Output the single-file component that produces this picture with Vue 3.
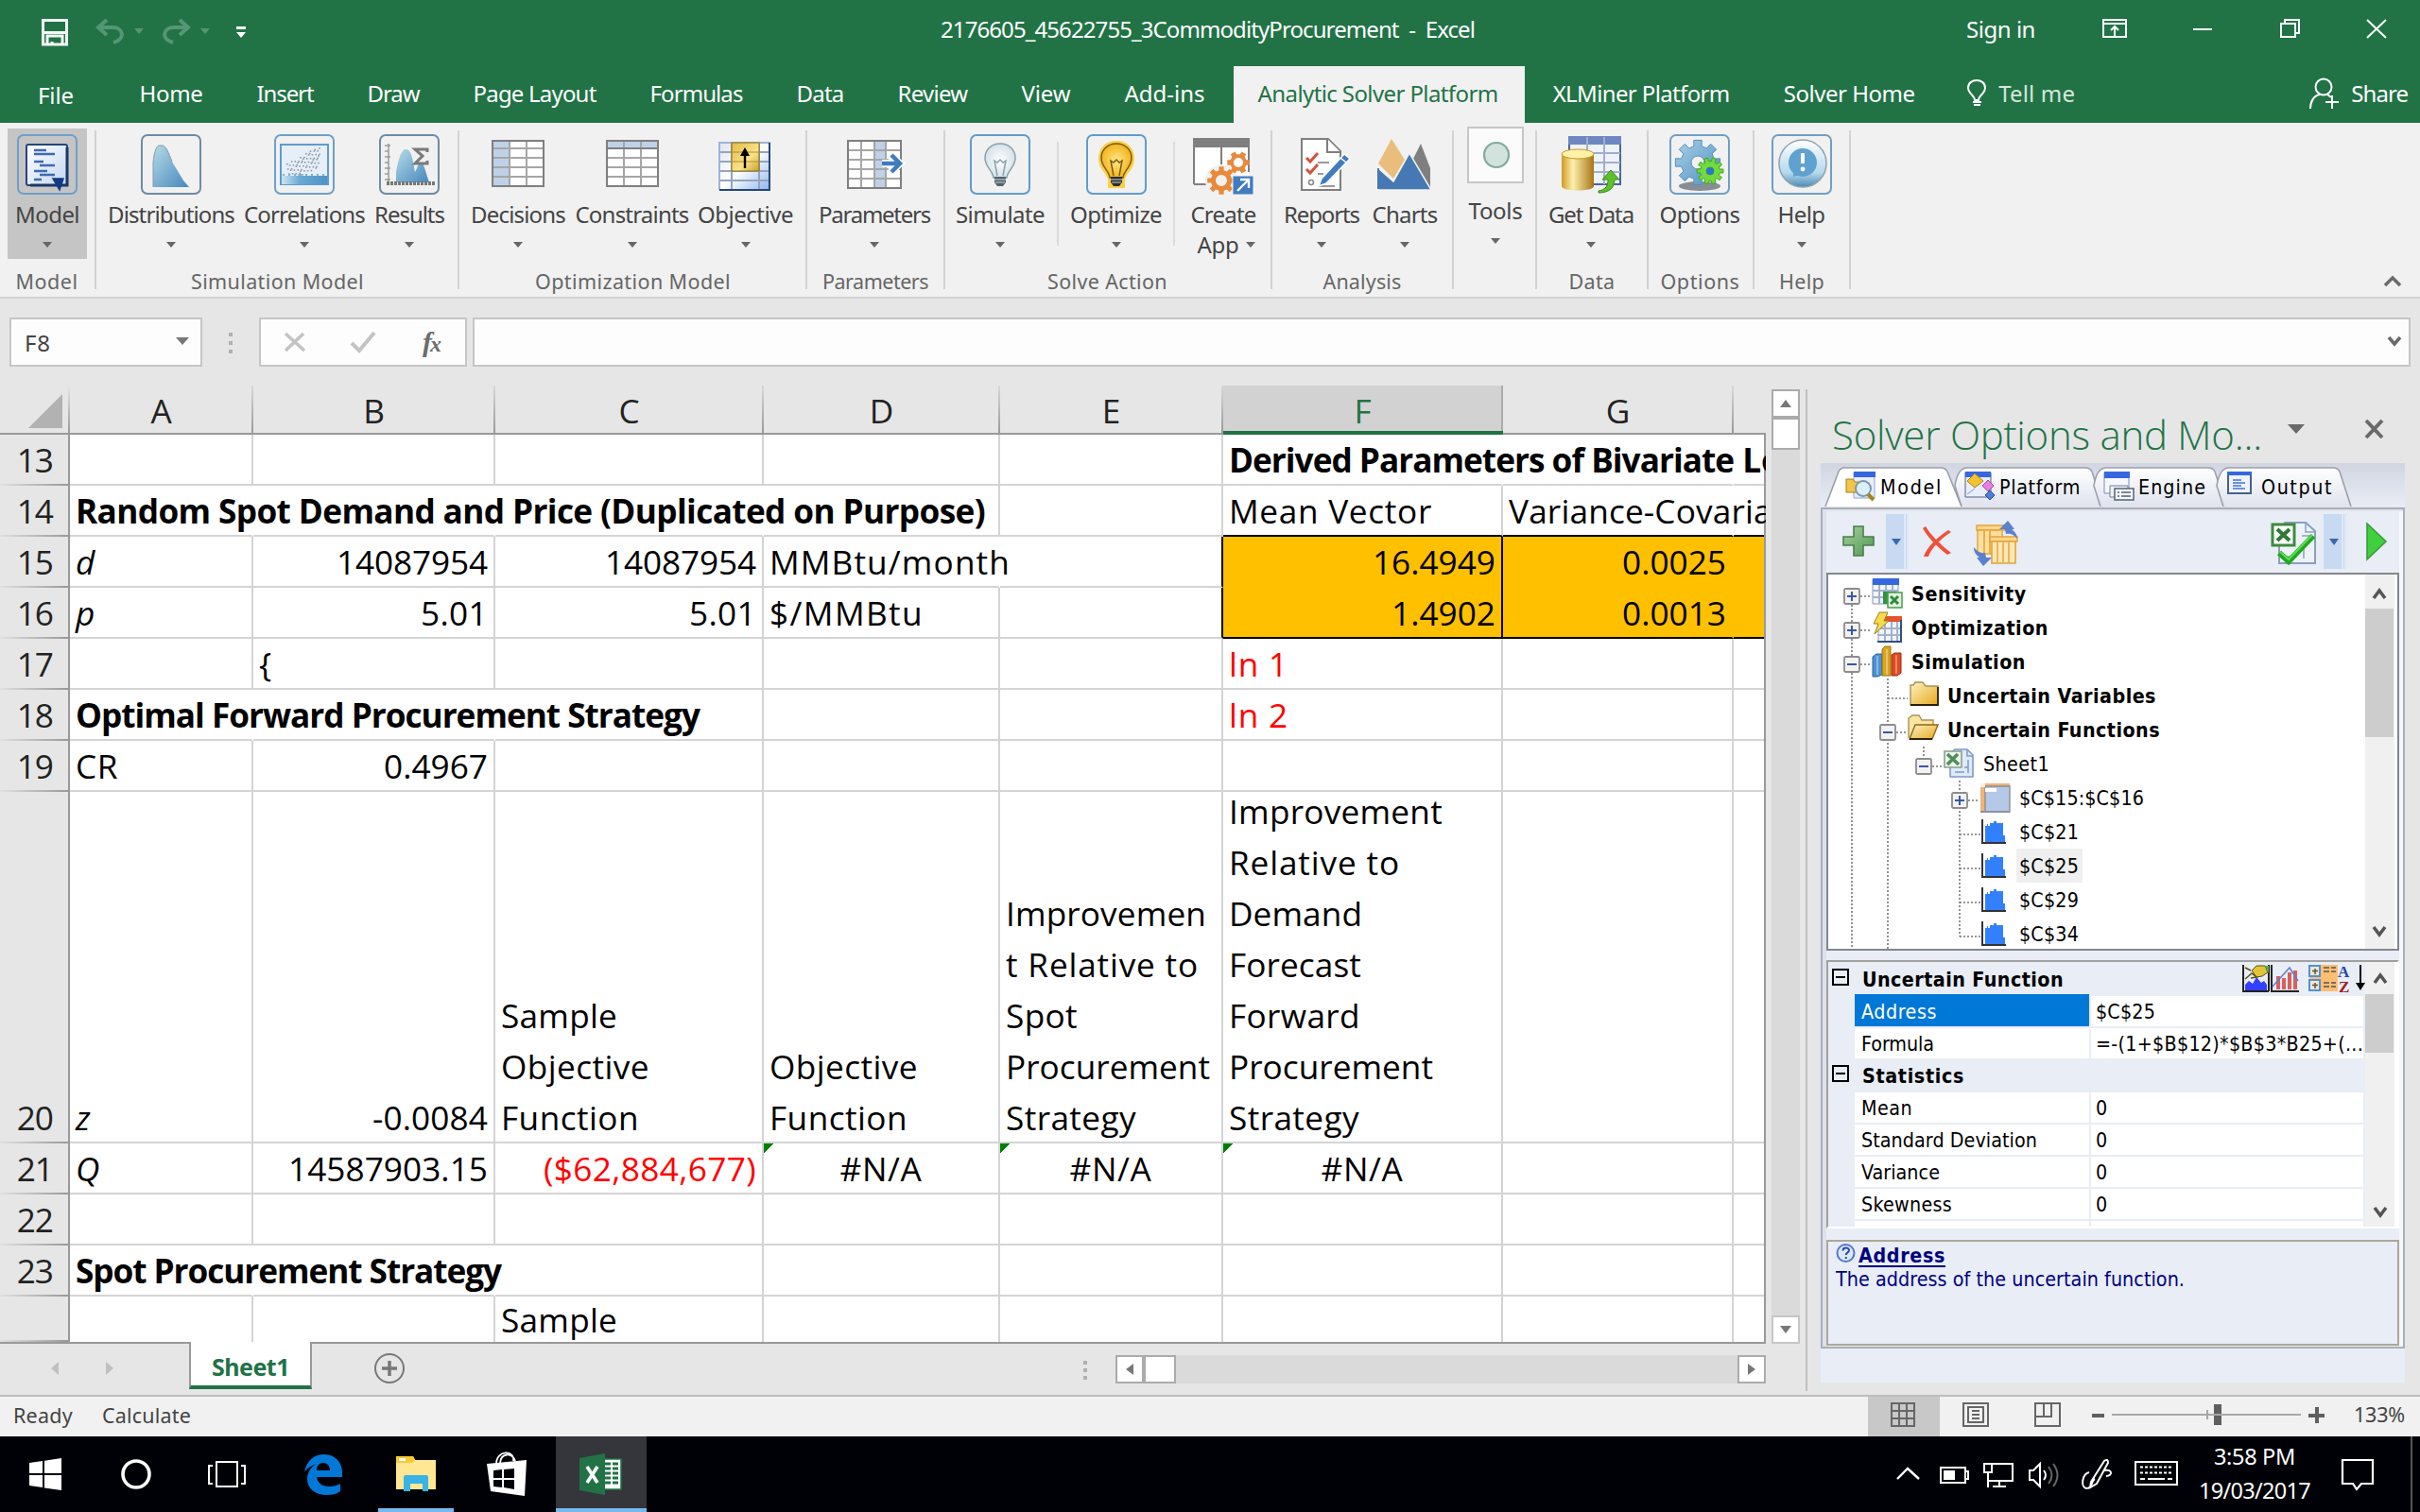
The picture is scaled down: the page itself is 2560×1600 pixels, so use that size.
<script setup>
const vFit = {
  mounted(el, { value }) {
    if (!value) return
    const natural = el.getBoundingClientRect().width
    el.style.letterSpacing = (value - natural) / el.textContent.length + 'px'
  }
}

const tabs = [
  ['Home', 67], ['Insert', 60], ['Draw', 55], ['Page Layout', 130], ['Formulas', 98], ['Data', 50],
  ['Review', 74], ['View', 52], ['Add-ins', 85], ['Analytic Solver Platform', 254],
  ['XLMiner Platform', 187], ['Solver Home', 139]
]

const frame = (s = '#6f9fc6') => `<rect x="1" y="1" width="62" height="62" rx="6" fill="none" stroke="${s}" stroke-width="2"/>`
const lines = (xs, y1, y2, ys, x1, x2, c) =>
  `<path fill="none" stroke="${c}" stroke-width="2" d="${xs.map(x => `M${x} ${y1}V${y2}`).join('')}${ys.map(y => `M${x1} ${y}H${x2}`).join('')}"/>`
const gear = (cx, cy, r, hole, n, fill, stroke = 'none') => {
  let d = ''
  for (let i = 0; i < n; i++) {
    const a = (i / n) * Math.PI * 2
    const s = Math.PI / n
    const p = (ang, rad) => `${(cx + Math.cos(ang) * rad).toFixed(1)} ${(cy + Math.sin(ang) * rad).toFixed(1)}`
    d += `${i ? 'L' : 'M'}${p(a - s * 0.45, r)}L${p(a + s * 0.45, r)}L${p(a + s * 0.6, r * 0.74)}L${p(a + s * 1.4, r * 0.74)}`
  }
  d += `ZM${cx - hole} ${cy}a${hole} ${hole} 0 1 0 ${hole * 2} 0a${hole} ${hole} 0 1 0 ${-hole * 2} 0Z`
  return `<path fill-rule="evenodd" fill="${fill}" stroke="${stroke}" d="${d}"/>`
}
const bulb = (fill, line, base) => `
  <path d="M32 10c-10 0-16 7-16 15 0 10 8 13 9 21h14c1-8 9-11 9-21 0-8-6-15-16-15z" fill="${fill}" stroke="${line}" stroke-width="1.5"/>
  <path d="M29 44l-3-16 3 2 3-3 3 3 3-2-3 16" fill="none" stroke="${line}" stroke-width="1.5"/>
  <path d="M26 45h12v6l-3 4h-6l-3-4z" fill="${base}"/><path d="M26 48h12M27 51h10" stroke="#cfd6da" stroke-width="1"/>`
const dots = Array.from({ length: 70 }, (_, i) => {
  const x = 13 + ((i * 17) % 37) * 0.95
  const y = 43 - (x - 10) * 0.55 + (((i * 29) % 23) - 11) * 0.95
  return `<rect x="${x.toFixed(1)}" y="${Math.max(14, Math.min(44, y)).toFixed(1)}" width="1.6" height="1.6" fill="#8d98a4"/>`
}).join('')

const icons = {
  model: frame() + `<rect x="10" y="11" width="43" height="43" rx="2" fill="url(#gPage)" stroke="#24477c" stroke-width="2"/>
    <path d="M53 14v40H14" fill="none" stroke="#1b3766" stroke-width="3"/>
    <path d="M18 17h13M18 21h22M18 29h10M24 33h16M18 39h14M24 43h16M18 48h8" stroke="#3f6ab0" stroke-width="2.4"/>
    <path d="M38 47h11l-4 12z" fill="#123a86" stroke="#123a86" stroke-width="1.5"/>`,
  dist: frame('#6f8aa3') + `<path d="M13 56V30c1-10 3-17 6-18h4c4 1 6 7 10 17l12 20 6 7z" fill="url(#gBlue)"/><path d="M13 56V30c1-10 3-17 6-18h4c4 1 6 7 10 17" fill="none" stroke="#8a98a4"/>`,
  corr: frame() + `<rect x="7" y="11" width="50" height="42" fill="#e6eef8" stroke="#5d9bd0" stroke-width="2"/>${dots}
    <rect x="8" y="44" width="48" height="9" fill="url(#gBar)"/><path d="M9 43h46" stroke="#7fb2d6" stroke-width="2" stroke-dasharray="2 4"/>`,
  results: frame('#6f8aa3') + `<path d="M6 12h6M6 18h4M6 24h6M6 30h4M6 36h6M6 42h4M6 48h6M10 10v41" stroke="#9a9a9a" stroke-width="1.5"/>
    <path d="M18 51V40c2-12 5-22 9-24h3c5 3 6 14 8 24 3-5 3-8 5-9h3c3 5 4 12 7 20z" fill="url(#gBlue)"/>
    <path d="M8 52h52" stroke="#777" stroke-width="4" stroke-dasharray="3 1"/>
    <path d="M51 19v-3H38l8 7-8 8h13v-3" fill="none" stroke="#7a7a7a" stroke-width="3"/>`,
  decisions: `<path d="M5 7h54v49H5z" fill="#fff"/><path d="M5 7h18v49H5z" fill="#bed1e8"/>` + lines([23, 41], 7, 56, [15, 25, 35, 45], 5, 59, '#a6a6a6') + `<path d="M5 7h54v48H5z" fill="none" stroke="#7f7f7f" stroke-width="2"/>`,
  constraints: `<path d="M5 7h54v49H5z" fill="#fff"/><path d="M5 7h54v8H5z" fill="#bed1e8"/>` + lines([23, 41], 7, 56, [25, 35, 45], 5, 59, '#a6a6a6') + `<path d="M5 15h54M5 7h54v48H5z" fill="none" stroke="#7f7f7f" stroke-width="2"/>`,
  objective: `<rect x="4" y="9" width="54" height="50" fill="url(#gSheet)"/>` + lines([17, 46], 9, 59, [19, 29, 39, 49], 4, 58, '#96a3bb') + `<path d="M4 59V9h54" fill="none" stroke="#9fb4d8" stroke-width="2"/><path d="M57 9v50H4" fill="none" stroke="#24477c" stroke-width="2"/>
    <rect x="17" y="9" width="29" height="30" fill="url(#gGold)" stroke="#8c6f1c"/><path d="M17 19h29M17 29h29" stroke="#b08d2a"/><path d="M31 36V20" stroke="#000" stroke-width="2.4"/><path d="M31 14l5 9H26z"/>`,
  params: `<path d="M4 7h56v50H4z" fill="#fff"/><path d="M32 7h12v50H32z" fill="#bed1e8"/>` + lines([18, 32, 44], 7, 57, [17, 27, 37, 47], 4, 60, '#a6a6a6') + `<path d="M4 7h56v50H4z" fill="none" stroke="#7f7f7f" stroke-width="2"/>
    <path d="M40 31h11M49 23l10 8-10 9" fill="none" stroke="#fff" stroke-width="8"/><path d="M40 31h16M50 22l9 9-9 9" fill="none" stroke="#3f7cbf" stroke-width="4.5"/>`,
  simulate: frame('#5f9ccb') + bulb('url(#gBulbW)', '#8aa0ab', '#53636c'),
  optimize: frame('#5f9ccb') + `<path d="M32 7c-12 0-19 8-19 19 0 11 8 14 10 22v9h18v-9c2-8 10-11 10-22 0-11-7-19-19-19z" fill="#ffc928" opacity=".85"/>` + bulb('url(#gBulbY)', '#7a5a10', '#2c2c2c'),
  create: `<path d="M1 5h58v48H1z" fill="#fff"/><path d="M1 53V5h58v35M30 14v30M1 53h13" fill="none" stroke="#7f7f7f" stroke-width="2"/><path d="M0 4h60v10H0z" fill="#7f7f7f"/>
    <circle cx="30" cy="49" r="17" fill="#f1f1f1"/>` + gear(48, 30, 12, 5, 6, '#e8893c') + gear(30, 49, 15, 6, 8, '#e8893c') + `<rect x="42" y="44" width="22" height="20" fill="#3f7cbf" stroke="#f1f1f1"/><path d="M47 60l11-11M50 48h9v9" fill="none" stroke="#fff" stroke-width="2.4"/>`,
  reports: `<path d="M11 5h28l13 13v41H11z" fill="#fff" stroke="#7f7f7f" stroke-width="2"/><path d="M38 5v14h14" fill="#fff" stroke="#7f7f7f" stroke-width="2"/>
    <path d="M28 30h12M28 42h6M28 55h18" stroke="#9a9a9a" stroke-width="2"/><path d="M16 25l4 4 8-9M16 37l4 4 8-9" fill="none" stroke="#d1533c" stroke-width="3"/><circle cx="21" cy="51" r="2.5" fill="none" stroke="#888" stroke-width="1.5"/>
    <path d="M56 21l6 5-25 26-8 3 3-8z" fill="#3f7cbf" stroke="#fff" stroke-width="1.5"/><path d="M52 25l6 5" stroke="#fff" stroke-width="1.5"/>`,
  charts: `<path d="M18 5l14 22-12 20L4 31z" fill="#e9be7c"/><path d="M49 10l10 26v22H40V28z" fill="#7f7f7f"/><path d="M4 36l16 14 17-30 23 39H4z" fill="#4679b3" stroke="#f1f1f1" stroke-width="1.5"/><path d="M4 58V36" stroke="#4679b3" stroke-width="2"/>`,
  tools: `<rect x="3" y="-3" width="58" height="58" fill="#fbfbfb" stroke="#c6c6c6" stroke-width="2"/><circle cx="33" cy="26" r="13" fill="#d2e2dc" stroke="#80ab9a" stroke-width="2.2"/>`,
  getdata: `<path d="M9 3h54v50H9z" fill="#eef2fa" stroke="#4a63a0" stroke-width="2"/><path d="M8 2h56v9H8z" fill="#6f87c0"/>` + lines([28, 46], 3, 53, [20, 30, 40], 9, 63, '#a3aecb') + `
    <path d="M1 22v33c0 6 34 6 34 0V22z" fill="url(#gCyl)"/><ellipse cx="18" cy="21" rx="17" ry="5" fill="#fff2a8" stroke="#c79a25"/>
    <path d="M40 60c8-1 10-6 10-12h-6l9-10 9 10h-5c0 9-6 14-17 14z" fill="#5cc02c" stroke="#3d8d17"/>`,
  options: frame() + `<ellipse cx="32" cy="55" rx="22" ry="5" fill="#59646c" opacity=".7"/>` + gear(30, 30, 24, 7, 8, 'url(#gGear)', '#5b8fb5') + gear(43, 39, 14, 4, 10, '#6fdc3c', '#46a31d') + `<circle cx="43" cy="39" r="4" fill="#2e74c8"/>`,
  help: frame() + `<circle cx="33" cy="31" r="25" fill="url(#gHelp)" stroke="#8da2b1" stroke-width="1.5"/><circle cx="33" cy="30" r="15" fill="#5fa2cf"/><path d="M23 38l0 7 9-3z" fill="#5fa2cf"/><path d="M33 20v11" stroke="#fff" stroke-width="4"/><circle cx="33" cy="37" r="2.4" fill="#fff"/>`,
  // task pane
  tModel: `<path d="M9 3h22v27H9z" fill="#e8eefb" stroke="#8fa5d6"/><path d="M9 2h23v6H9z" fill="#3567e0"/><path d="M1 10h7l2 3h6v11H1z" fill="#f0c548" stroke="#a8821b"/><circle cx="19" cy="20" r="8" fill="#d9effb" stroke="#7f97a8" stroke-width="2"/><path d="M24 26l6 6" stroke="#a8821b" stroke-width="4"/>`,
  tPlatform: `<path d="M1 3h27v26H1z" fill="#e8eefb" stroke="#54617a"/><path d="M1 2h27v6H1z" fill="#3567e0"/><path d="M11 4l9 8-9 7-8-7z" fill="#f2c230" stroke="#a8821b"/><path d="M25 11l6 6-6 6-6-6z" fill="#e67fe0" stroke="#a84ba0"/><path d="M27 22l5 5-5 5-5-5z" fill="#4c7de0" stroke="#2b4fa0"/><path d="M3 26l8-6" stroke="#8899bb"/>`,
  tEngine: `<path d="M1 3h26v22H1z" fill="#f6f8fd" stroke="#7b8db5"/><path d="M1 2h27v7H1z" fill="#3567e0"/><path d="M7 17h19v12H7z" fill="#eef1f7" stroke="#6f7f96"/><path d="M12 20h20v12H12z" fill="#f6f8fb" stroke="#54617a" stroke-width="1.5"/><path d="M19 24h10M19 28h10" stroke="#54617a" stroke-width="1.5"/><path d="M15 24h2M15 28h2" stroke="#54617a" stroke-width="1.5"/>`,
  tOutput: `<path d="M2 3h24v22H2z" fill="#eef3fd" stroke="#4a5f8a" stroke-width="2"/><path d="M1 2h26v4H1z" fill="#3567e0"/><path d="M7 11h9M7 14h13M7 17h9M7 20h13" stroke="#4573cf" stroke-width="1.6"/>`,
  plus: `<path d="M12 1h10v11h11v9H22v11H12V21H1v-9h11z" fill="url(#gPlus)" stroke="#4c7d4c" stroke-width="1.6"/>`,
  cross: `<path d="M4 1c4 7 14 18 27 28l-4 2C16 22 7 14 1 3zM31 7C20 14 10 24 7 33H2C5 23 17 12 28 5z" fill="#f0503a"/>`,
  trash: `<path d="M4 5h30v5H4z" fill="#fdd58a" stroke="#e5a23a" stroke-width="1.4"/><path d="M5 10h26v25H5z" fill="#fde0a0" stroke="#e5a23a" stroke-width="1.4"/><path d="M12 11v24M18 11v24" stroke="#e5a23a" stroke-width="1.6"/>
    <path d="M18 17h29v5H18z" fill="#fdd58a" stroke="#e5a23a" stroke-width="1.4"/><path d="M20 22h25v23H20z" fill="#ffe8b4" stroke="#e5a23a" stroke-width="1.6"/><path d="M26 23v22M32 23v22M38 23v22" stroke="#eab055" stroke-width="1.8"/>
    <path d="M28 9l9-9 7 9-3 0c4 3 6 6 6 10-4-5-8-6-12-5l-1-5z" fill="#5b80cc"/><path d="M20 39l-9 9-7-9h3c-4-3-6-6-6-11 4 5 8 7 12 6l1 5z" fill="#5b80cc"/>`,
  check: `<path d="M14 2h22l10 9v34H8V14z" fill="#eef3fb" stroke="#8aa0bd" stroke-width="2"/><path d="M36 2v10h10M32 16h10M14 38h12M34 30v10" fill="none" stroke="#8aa0bd" stroke-width="1.5"/><path d="M1 4h23v22H1z" fill="#fff" stroke="#3d8c3d" stroke-width="3"/><path d="M6 9l13 12M19 9L6 21" stroke="#2e7a35" stroke-width="4"/><path d="M8 34l10 9L44 16" fill="none" stroke="#1fa81f" stroke-width="6"/><path d="M9 33l9 8L43 15" fill="none" stroke="#5fdc50" stroke-width="2"/>`,
  play: `<path d="M1 1l20 19L1 39z" fill="#3fcf3f" stroke="#3c9a3c" stroke-width="1.6"/>`,
  sens: `<path d="M1 1h27v26H1z" fill="#f2f5fc" stroke="#8797b8"/><path d="M1 0h28v7H1z" fill="#3567e0"/>` + lines([8, 15, 22], 7, 27, [13, 20], 1, 28, '#a3b1cd') + `<path d="M12 14h14v13H12z" fill="#2f9440"/><path d="M17 15h15v16H17z" fill="#e3f3df" stroke="#4d9a50" stroke-width="1.5"/><path d="M20 19l8 8M28 19l-8 8" stroke="#2f8a3a" stroke-width="3"/>`,
  opt: `<path d="M7 6h24v25H7z" fill="#f2f5fc" stroke="#8797b8"/><path d="M12 4h20v6H10z" fill="#e2552b"/>` + lines([14, 21, 27], 10, 30, [17, 24], 6, 31, '#a3b1cd') + `<path d="M31 8v23H6" fill="none" stroke="#32507f" stroke-width="2"/><path d="M8 0h9l-4 9h5L3 23l4-11H2z" fill="#f6da4e" stroke="#94801d"/>`,
  sim: `<path d="M1 11l4-3h6v22l-5 2H1z" fill="#4b93d8" stroke="#2a6299"/><path d="M11 3l3-3h6v31h-9z" fill="#d9a51c" stroke="#9a7411"/><path d="M21 9l3-2h7v21l-4 3h-6z" fill="#e2491f" stroke="#a03010"/><path d="M6 10v20M16 3v27M26 9v20" stroke="#fff" opacity=".35" stroke-width="2"/>`,
  folder: `<path d="M3 5h3l2-3h8l3 4h13v20H3z" fill="url(#gFolder)" stroke="#a8925a" stroke-width="1.4"/><path d="M3 26h29V7" fill="none" stroke="#2a2208" stroke-width="1.8"/>`,
  folderOpen: `<path d="M1 25V4l4-3h7l3 5h12v8" fill="#f8e6a0" stroke="#a8925a" stroke-width="1.4"/><path d="M8 11h24l-6 15H2z" fill="url(#gFolder)" stroke="#8b6b18" stroke-width="1.4"/><path d="M2 26h24" stroke="#2a2208" stroke-width="2"/>`,
  sheet: `<path d="M12 1h13l6 6v23H7V5z" fill="#dfeafa" stroke="#7f9bc8" stroke-width="1.6"/><path d="M25 1v7h6M26 12v14M12 25h10M22 20h4" fill="none" stroke="#7f9bc8" stroke-width="1.5"/><path d="M1 3h18v17H1z" fill="#eef5ee" stroke="#8aa08c" stroke-width="1.6"/><path d="M4 6l12 11M15 6L4 17" stroke="#4f8f57" stroke-width="3.6"/>`,
  range: `<path d="M1 1h31v30H1z" fill="#f0b37a"/><path d="M6 4h26v27H6z" fill="#b5c8e8" stroke="#8f8f8f" stroke-width="1.4"/><path d="M6 6h12v4H6z" fill="#fff"/><path d="M1 1h5v4H1z" fill="#f5f0e6"/><path d="M1 31h31" stroke="#8c93a6" stroke-width="2"/>`,
  hist: `<path d="M6 27V10h2V8h1v2h2V7h4V5h3v2h2V7h5v13h2v8H6z" fill="#3380ff"/><path d="M3 3v25h25" fill="none" stroke="#333" stroke-width="2"/>`
}

const B = (icon, label, w, fit, extra = {}) => ({ icon, label, w, fit, arrow: true, ...extra })
const groups = [
  { w: 102, pad: 8, label: 'Model', fit: 66, c: 49.5, items: [B('model', 'Model', 84, 68, { on: true })] },
  { w: 384, pad: 8, label: 'Simulation Model', fit: 183, c: 191.5, items: [B('dist', 'Distributions', 142, 134), B('corr', 'Correlations', 140, 128), B('results', 'Results', 82, 74)] },
  { w: 368, pad: 7, label: 'Optimization Model', fit: 207, c: 183.5, items: [B('decisions', 'Decisions', 110, 100), B('constraints', 'Constraints', 131, 120), B('objective', 'Objective', 109, 101)] },
  { w: 146, pad: 5, label: 'Parameters', fit: 112, c: 72, items: [B('params', 'Parameters', 132, 118)] },
  { w: 346, pad: 5, label: 'Solve Action', fit: 127, c: 171.5, items: [B('simulate', 'Simulate', 106, 94), { sep: true }, B('optimize', 'Optimize', 107, 97), { sep: true }, B('create', 'Create', 88, 69, { arrow: false, second: 'App' })] },
  { w: 192, pad: 5, label: 'Analysis', fit: 83, c: 95, items: [B('reports', 'Reports', 94, 80), B('charts', 'Charts', 82, 69)] },
  { w: 88, pad: 6, label: '', items: [B('tools', 'Tools', 76, 57, { up: true })] },
  { w: 118, pad: 5, label: 'Data', fit: 49, c: 58, items: [B('getdata', 'Get Data', 104, 90)] },
  { w: 112, pad: 5, label: 'Options', fit: 84, c: 54.5, items: [B('options', 'Options', 98, 85, { arrow: false })] },
  { w: 102, pad: 5, label: 'Help', fit: 48, c: 50, items: [B('help', 'Help', 89, 50)] }
]

const colW = [194, 256, 284, 250, 236, 296, 244, 32]
const cols = ['A', 'B', 'C', 'D', 'E', 'F', 'G', '']
const L = (t, f, x = '') => ({ l: [[t, f]], x })
const rows = [
  { n: 13, h: 54, c: { 5: { l: [['Derived Parameters of Bivariate', 534], [' Lo', 0]], x: 'b inline nr' }, 6: { l: [], x: 'nr' } } },
  { n: 14, h: 54, c: { 0: L('Random Spot Demand and Price (Duplicated on Purpose)', 962, 'b nr'), 1: { l: [], x: 'nr' }, 2: { l: [], x: 'nr' }, 5: L('Mean Vector', 215, 'kb'), 6: { l: [['Variance-Covari', 259], ['a', 0]], x: 'inline nr kb' }, 7: { l: [], x: 'kb' } } },
  { n: 15, h: 54, c: { 0: L('d', 0, 'i'), 1: L('14087954', 160, 'r'), 2: L('14087954', 160, 'r'), 3: L('MMBtu/month', 255, 'nr'), 4: { l: [], x: 'kr' }, 5: L('16.4949', 130, 'r o kr nb'), 6: L('0.0025', 110, 'r o or nb'), 7: { l: [], x: 'o nb' } } },
  { n: 16, h: 54, c: { 0: L('p', 0, 'i'), 1: L('5.01', 71, 'r'), 2: L('5.01', 71, 'r'), 3: L('$/MMBtu', 163), 4: { l: [], x: 'kr' }, 5: L('1.4902', 110, 'r o kr kb'), 6: L('0.0013', 110, 'r o or kb'), 7: { l: [], x: 'o kb' } } },
  { n: 17, h: 54, c: { 1: L('{', 0), 5: L('ln 1', 63, 'red') } },
  { n: 18, h: 54, c: { 0: L('Optimal Forward Procurement Strategy', 660, 'b nr'), 1: { l: [], x: 'nr' }, 5: L('ln 2', 63, 'red') } },
  { n: 19, h: 54, c: { 0: L('CR', 45), 1: L('0.4967', 110, 'r') } },
  {
    n: 20, h: 372, c: {
      0: L('z', 0, 'i'), 1: L('-0.0084', 122, 'r'),
      2: { l: [['Sample', 123], ['Objective', 157], ['Function', 146]] },
      3: { l: [['Objective', 157], ['Function', 146]] },
      4: { l: [['Improvemen', 212], ['t Relative to', 204], ['Spot', 76], ['Procurement', 216], ['Strategy', 138]] },
      5: { l: [['Improvement', 226], ['Relative to', 181], ['Demand', 141], ['Forecast', 140], ['Forward', 139], ['Procurement', 216], ['Strategy', 138]] }
    }
  },
  { n: 21, h: 54, c: { 0: L('Q', 0, 'i'), 1: L('14587903.15', 211, 'r'), 2: L('($62,884,677)', 225, 'r red'), 3: L('#N/A', 87, 'ce err'), 4: L('#N/A', 87, 'ce err'), 5: L('#N/A', 87, 'ce err') } },
  { n: 22, h: 54, c: {} },
  { n: 23, h: 54, c: { 0: L('Spot Procurement Strategy', 450, 'b nr'), 1: { l: [], x: 'nr' } } },
  { n: '', h: 48, last: true, c: { 2: L('Sample', 123) } }
]

const paneTabs = [
  { t: 'Model', f: 66, w: 144, icon: 'tModel', on: true, ix: 21 },
  { t: 'Platform', f: 86, w: 147, icon: 'tPlatform', ix: 3 },
  { t: 'Engine', f: 72, w: 130, icon: 'tEngine', ix: 3 },
  { t: 'Output', f: 76, w: 132, icon: 'tOutput', ix: 3 }
]
const tree = [
  { t: 'Sensitivity', f: 122, lv: 0, e: '+', icon: 'sens', b: 1 },
  { t: 'Optimization', f: 145, lv: 0, e: '+', icon: 'opt', b: 1 },
  { t: 'Simulation', f: 121, lv: 0, e: '-', icon: 'sim', b: 1 },
  { t: 'Uncertain Variables', f: 221, lv: 1, icon: 'folder', b: 1 },
  { t: 'Uncertain Functions', f: 225, lv: 1, e: '-', icon: 'folderOpen', b: 1 },
  { t: 'Sheet1', f: 70, lv: 2, e: '-', icon: 'sheet' },
  { t: '$C$15:$C$16', f: 132, lv: 3, e: '+', icon: 'range' },
  { t: '$C$21', f: 63, lv: 3, icon: 'hist' },
  { t: '$C$25', f: 63, lv: 3, icon: 'hist', sel: true },
  { t: '$C$29', f: 63, lv: 3, icon: 'hist' },
  { t: '$C$34', f: 63, lv: 3, icon: 'hist' }
]
const props = [
  { head: 'Uncertain Function', f: 213 },
  { k: 'Address', kf: 80, v: '$C$25', vf: 63, sel: true },
  { k: 'Formula', kf: 77, v: '=-(1+$B$12)*$B$3*B25+(...', vf: 283 },
  { head: 'Statistics', f: 108 },
  { k: 'Mean', kf: 54, v: '0' },
  { k: 'Standard Deviation', kf: 186, v: '0' },
  { k: 'Variance', kf: 83, v: '0' },
  { k: 'Skewness', kf: 96, v: '0' },
  { k: '', v: '' }
]
</script>

<template>
  <div class="screen">
    <svg class="defs" width="0" height="0">
      <defs>
        <linearGradient id="gPage" x1="0" y1="0" x2="1" y2="1"><stop offset="0" stop-color="#fff" /><stop offset="1" stop-color="#c3d6f2" /></linearGradient>
        <linearGradient id="gBlue" x1="0" y1="0" x2="1" y2="1"><stop offset="0" stop-color="#b5dbe8" /><stop offset="1" stop-color="#4687bb" /></linearGradient>
        <linearGradient id="gBar"><stop offset="0" stop-color="#cfe5f3" /><stop offset=".4" stop-color="#6aa9d2" /><stop offset="1" stop-color="#4f94c6" /></linearGradient>
        <linearGradient id="gSheet" x1="0" y1="0" x2="1" y2="1"><stop offset="0" stop-color="#dfe6f0" /><stop offset=".5" stop-color="#fff" /><stop offset="1" stop-color="#8ab4ec" /></linearGradient>
        <linearGradient id="gGold" x1="0" y1="0" x2="1" y2="1"><stop offset="0" stop-color="#e2bb42" /><stop offset=".6" stop-color="#f8e38a" /><stop offset="1" stop-color="#caa02c" /></linearGradient>
        <radialGradient id="gBulbW"><stop offset="0" stop-color="#fff" /><stop offset="1" stop-color="#d5e2e8" /></radialGradient>
        <radialGradient id="gBulbY"><stop offset="0" stop-color="#ffe88a" /><stop offset="1" stop-color="#f2b51c" /></radialGradient>
        <linearGradient id="gCyl"><stop offset="0" stop-color="#d09a1f" /><stop offset=".35" stop-color="#fdf1b0" /><stop offset="1" stop-color="#a87411" /></linearGradient>
        <linearGradient id="gGear" x1="0" y1="0" x2="1" y2="1"><stop offset="0" stop-color="#a9cfe6" /><stop offset="1" stop-color="#4b92c2" /></linearGradient>
        <linearGradient id="gHelp" x1="0" y1="0" x2="0" y2="1"><stop offset="0" stop-color="#fff" /><stop offset=".7" stop-color="#b4d8ec" /><stop offset="1" stop-color="#4b8bb3" /></linearGradient>
        <linearGradient id="gPlus" x1="0" y1="0" x2="1" y2="1"><stop offset="0" stop-color="#a4cf9e" /><stop offset="1" stop-color="#4f9a52" /></linearGradient>
        <linearGradient id="gFolder" x1="0" y1="0" x2="1" y2="1"><stop offset="0" stop-color="#fdf3c4" /><stop offset="1" stop-color="#e5a91d" /></linearGradient>
        <linearGradient id="gTab" x1="0" y1="0" x2="0" y2="1"><stop offset="0" stop-color="#fff" /><stop offset="1" stop-color="#dfe3ee" /></linearGradient>
      </defs>
    </svg>

    <header class="title">
      <svg class="qat" width="300" height="61" viewBox="0 0 300 61">
        <path d="M45.500 21.500h25v25.500h-25zM45 34.500h26" fill="none" stroke="#f4f8f5" stroke-width="3" />
        <path d="M50 47v-9h16v9M55 48v-4" fill="none" stroke="#f4f8f5" stroke-width="3" />
        <g fill="none" stroke="#559674" stroke-width="4"><path d="M113 21l-9 8 9 8M105 29h14c12 0 14 13 1 16" /><path d="M190 21l9 8-9 8M198 29h-14c-12 0-14 13-1 16" /></g>
        <path d="M142 30h10l-5 6zM212 30h10l-5 6z" fill="#559674" />
        <path d="M250 28h10v3h-10zM250 34h10l-5 6z" fill="#fff" />
      </svg>
      <span class="name"><span v-fit="565">2176605_45622755_3CommodityProcurement&nbsp; -&nbsp; Excel</span></span>
      <span class="signin"><span v-fit="73">Sign in</span></span>
      <svg class="winbtns" width="340" height="61" viewBox="2220 0 340 61" fill="none" stroke="#fff" stroke-width="2">
        <path d="M2225 21h24v18h-24zM2225 25h24M2237 38V29M2233 32l4-4 4 4" />
        <path d="M2320 31h20M2413 25h15v14h-15zM2417 24v-3h15v14h-3" />
        <path d="M2504 21l20 19M2524 21l-20 19" />
      </svg>
    </header>

    <nav class="tabs">
      <span class="file"><span v-fit="38">File</span></span>
      <span v-for="t in tabs" :key="t[0]" class="tab" :class="{ active: t[0].startsWith('Analytic') }"><span v-fit="t[1]">{{ t[0] }}</span></span>
      <svg class="tellbulb" width="24" height="32" viewBox="0 0 24 32" fill="none" stroke="#fff" stroke-width="2"><path d="M9 22c0-5-7-7-7-13 0-5 4-8 9-8s9 3 9 8c0 6-7 8-7 13zM7 24h9M8 27h7" /></svg>
      <span class="tell"><span v-fit="81">Tell me</span></span>
      <svg class="person" width="32" height="34" viewBox="0 0 32 34" fill="none" stroke="#fff" stroke-width="2"><circle cx="15" cy="10" r="8.500" /><path d="M1 33c0-8 4-14 10-15M19 18l4 3M17 26h14M24 19v14" /></svg>
      <span class="share"><span v-fit="60">Share</span></span>
    </nav>

    <section class="ribbon">
      <div v-for="(g, gi) in groups" :key="gi" class="group" :style="{ width: g.w + 'px' }">
        <div class="btns" :style="{ paddingLeft: g.pad + 'px' }">
          <template v-for="(b, bi) in g.items" :key="bi">
            <i v-if="b.sep" class="isep"></i>
            <div v-else class="btn" :class="{ on: b.on, up: b.up }" :style="{ width: b.w + 'px' }">
              <svg width="64" height="64" viewBox="0 0 64 64" v-html="icons[b.icon]"></svg>
              <span class="lbl"><span v-fit="b.fit">{{ b.label }}</span></span>
              <i v-if="b.arrow" class="down"></i>
              <span v-if="b.second" class="second"><span v-fit="44">{{ b.second }}</span><i class="down"></i></span>
            </div>
          </template>
        </div>
        <div v-if="g.label" class="glabel" :style="{ width: g.c * 2 + 'px' }"><span v-fit="g.fit">{{ g.label }}</span></div>
      </div>
      <svg class="collapse" width="22" height="16" viewBox="0 0 22 16"><path d="M3 12l8-8 8 8" fill="none" stroke="#6a6a6a" stroke-width="3.500" /></svg>
    </section>

    <section class="fbar">
      <div class="namebox"><span v-fit="28">F8</span><svg width="16" height="10" viewBox="0 0 16 10"><path d="M1 1h14L8 9z" fill="#777" /></svg></div>
      <div class="vdots"><i></i><i></i><i></i></div>
      <div class="fxbox">
        <svg width="24" height="24" viewBox="0 0 24 24"><path d="M2 3l20 18M21 3L2 21" stroke="#c3c3c3" stroke-width="3.500" /></svg>
        <svg width="28" height="24" viewBox="0 0 28 24"><path d="M2 13l8 8L26 2" fill="none" stroke="#c3c3c3" stroke-width="4" /></svg>
        <em>f<small>x</small></em>
      </div>
      <div class="formula"><svg width="18" height="14" viewBox="0 0 18 14"><path d="M3 2l6 7 6-7" fill="none" stroke="#6a6a6a" stroke-width="3.500" /></svg></div>
    </section>

    <main class="work">
      <div class="left">
        <div class="upper">
          <div class="sheet">
            <div class="hrow">
              <div class="corner"><svg width="36" height="36" viewBox="0 0 36 36"><path d="M36 0v36H0z" fill="#b2b2b2" /></svg></div>
              <div v-for="(c, i) in cols" :key="i" class="hcell" :class="{ sel: c === 'F', end: !c }" :style="{ width: colW[i] + 'px' }">{{ c }}</div>
            </div>
            <div v-for="(r, ri) in rows" :key="ri" class="row" :class="{ last: r.last }" :style="{ height: r.h + 'px' }">
              <div class="rhead">{{ r.n }}</div>
              <div v-for="(w, i) in colW" :key="i" class="cell" :class="r.c[i] && r.c[i].x" :style="{ width: w + 'px' }">
                <template v-if="r.c[i]"><div v-for="(ln, li) in r.c[i].l" :key="li" class="ln"><span v-fit="ln[1]">{{ ln[0] }}</span></div></template>
              </div>
            </div>
          </div>
          <div class="vscroll">
            <div class="sb"><svg width="14" height="10" viewBox="0 0 14 10"><path d="M7 1l6 8H1z" fill="#777" /></svg></div>
            <div class="thumb"></div>
            <div class="sb bottom"><svg width="14" height="10" viewBox="0 0 14 10"><path d="M7 9l6-8H1z" fill="#777" /></svg></div>
          </div>
        </div>
        <div class="sheetbar">
          <div class="nav"><svg width="200" height="52" viewBox="0 0 200 52"><path d="M62 19v14l-8-7zM112 19v14l8-7z" fill="#c0c0c0" /></svg></div>
          <div class="stab"><span v-fit="82">Sheet1</span></div>
          <div class="rest">
            <svg class="add" width="34" height="34" viewBox="0 0 34 34" fill="none" stroke="#777"><circle cx="17" cy="17" r="15" stroke-width="2" /><path d="M9 17h16M17 9v16" stroke-width="3.500" /></svg>
            <div class="vdots hd"><i></i><i></i><i></i></div>
            <div class="hscroll">
              <div class="sb"><svg width="10" height="14" viewBox="0 0 10 14"><path d="M1 7l8-6v12z" fill="#777" /></svg></div>
              <div class="thumb"></div>
              <div class="sb right"><svg width="10" height="14" viewBox="0 0 10 14"><path d="M9 7L1 1v12z" fill="#777" /></svg></div>
            </div>
          </div>
        </div>
      </div>
      <div class="split"></div>

      <aside class="pane">
        <div class="ptitle">
          <span class="pt"><span v-fit="455">Solver Options and Mo...</span></span>
          <svg width="110" height="24" viewBox="0 0 110 24"><path d="M1 7h18l-9 10z" fill="#6a6a6a" /><path d="M84 3l17 18M101 3L84 21" stroke="#6a6a6a" stroke-width="4" /></svg>
        </div>
        <div class="ptabs">
          <div v-for="t in paneTabs" :key="t.t" class="ptab" :class="{ on: t.on }" :style="{ width: t.w + 'px', paddingLeft: t.ix + 'px' }">
            <svg class="shape" :width="t.w + 12" height="42" :viewBox="`0 0 ${t.w + 12} 42`">
              <path v-if="t.on" :d="`M0 42L14 5Q16 1 20 1H${t.w - 22}Q${t.w - 17} 1 ${t.w - 15} 5L${t.w} 42`" fill="#fff" stroke="#9aa0ac" stroke-width="1.600" />
              <path v-else :d="`M0 42L-7 20Q-4 1 6 1H${t.w - 16}Q${t.w - 11} 1 ${t.w - 9} 5L${t.w + 3} 42`" fill="url(#gTab)" stroke="#9aa0ac" stroke-width="1.600" />
            </svg>
            <svg class="pic" width="33" height="34" viewBox="0 0 33 34" v-html="icons[t.icon]"></svg>
            <span class="tt"><span v-fit="t.f">{{ t.t }}</span></span>
          </div>
        </div>
        <div class="pbody">
          <div class="tool">
            <svg class="t1" width="34" height="34" viewBox="0 0 34 34" v-html="icons.plus"></svg>
            <div class="dd"><i></i></div>
            <svg class="t2" width="33" height="34" viewBox="0 0 33 34" v-html="icons.cross"></svg>
            <svg class="t3" width="48" height="48" viewBox="0 0 48 48" v-html="icons.trash"></svg>
            <svg class="t4" width="48" height="48" viewBox="0 0 48 48" v-html="icons.check"></svg>
            <div class="dd"><i></i></div>
            <svg class="t5" width="22" height="40" viewBox="0 0 22 40" v-html="icons.play"></svg>
          </div>
          <div class="tree">
            <svg class="wires" width="200" height="396" viewBox="1934 608 200 396" fill="none" stroke="#777" stroke-width="1.600" stroke-dasharray="2 2">
              <path d="M1959 640V1004M1997 718V1004M2035 790V805M2073 826V991M1968 631H1980M1968 667H1980M1968 703H1980M1997 739H2018M2006 775H2018M2044 811H2056M2082 847H2094M2073 883H2095M2073 919H2095M2073 955H2095M2073 991H2095" />
            </svg>
            <div class="nodes">
              <div v-for="n in tree" :key="n.t" class="node" :class="{ b: n.b, sel: n.sel }" :style="{ paddingLeft: 16 + n.lv * 38 + 'px' }">
                <svg class="ex" width="18" height="18" viewBox="0 0 18 18"><g v-if="n.e"><rect x="1" y="1" width="16" height="16" rx="1.500" fill="#f2f2f2" stroke="#8c8c8c" stroke-width="1.800" /><path :d="n.e === '+' ? 'M4 9h10M9 4v10' : 'M4 9h10'" stroke="#3b56a8" stroke-width="2" /></g></svg>
                <svg class="ni" width="32" height="32" viewBox="0 0 32 32" v-html="icons[n.icon]"></svg>
                <span class="nt"><span v-fit="n.f">{{ n.t }}</span></span>
              </div>
            </div>
            <div class="wsb">
              <svg width="30" height="36" viewBox="0 0 30 36"><path d="M9 25l6-8 6 8" fill="none" stroke="#555" stroke-width="3.500" /></svg>
              <div class="wth tall"></div>
              <svg class="dn" width="30" height="36" viewBox="0 0 30 36"><path d="M9 13l6 8 6-8" fill="none" stroke="#555" stroke-width="3.500" /></svg>
            </div>
          </div>
          <div class="pgrid">
            <div class="plist">
              <div v-for="(p, i) in props" :key="i" class="prow" :class="{ head: p.head, sel: p.sel }">
                <template v-if="p.head">
                  <svg class="mb" width="18" height="18" viewBox="0 0 18 18"><path d="M1 1h16v16H1zM4 9h10" fill="none" stroke="#000" stroke-width="2" /></svg>
                  <b><span v-fit="p.f">{{ p.head }}</span></b>
                  <svg v-if="i === 0" class="pico" width="130" height="30" viewBox="2372 1020 130 30">
                    <path d="M2373 1021v28h27M2400 1021v28" fill="none" stroke="#222" stroke-width="2" /><path d="M2375 1048v-6l4-4 4 3 4-7 5 6 3-2 3 4v6z" fill="#3340ff" /><path d="M2382 1027l5-5h9l3 7-6 4-6 1z" fill="#e0c53a" stroke="#5a5214" /><path d="M2375 1024l6 3M2375 1036l7-6 5 4-6 1" fill="none" stroke="#5a5214" stroke-width="1.500" /><path d="M2396 1022h4v8z" fill="#58b04c" />
                    <path d="M2403 1021v28h29" fill="none" stroke="#222" stroke-width="2" /><path d="M2408 1047v-14h4v14zM2414 1047v-12h4v12zM2420 1047v-18h4v18zM2426 1047v-20h4v20z" fill="#d8605c" /><path d="M2404 1044l18-20 9 14" fill="none" stroke="#5a80d0" stroke-width="1.500" />
                    <path d="M2443 1021h30v28h-30z" fill="#ffbe72" /><path d="M2443 1022h11v11h-11zM2443 1037h11v11h-11z" fill="#fbe6c8" stroke="#4f93d8" stroke-width="2" /><path d="M2446 1027.500h6M2449 1025v6M2446 1042.500h6M2449 1040v6M2458 1024h6M2466 1024h5M2458 1028h6M2466 1028h5M2458 1040h6M2466 1040h5M2458 1044h6M2466 1044h5" stroke="#555" stroke-width="1.500" />
                    <text x="2473" y="1034" class="az" fill="#2747a8">A</text><text x="2474" y="1050" class="az" fill="#a32020">Z</text>
                    <path d="M2497 1021v22" stroke="#000" stroke-width="2" /><path d="M2492 1040h10l-5 8z" />
                  </svg>
                </template>
                <template v-else>
                  <span class="k"><span v-fit="p.kf">{{ p.k }}</span></span><span class="v"><span v-fit="p.vf">{{ p.v }}</span></span>
                </template>
              </div>
            </div>
            <div class="wsb">
              <svg width="30" height="34" viewBox="0 0 30 34"><path d="M10 22l6-8 6 8" fill="none" stroke="#555" stroke-width="3.500" /></svg>
              <div class="wth short"></div>
              <svg class="dn" width="30" height="34" viewBox="0 0 30 34"><path d="M10 14l6 8 6-8" fill="none" stroke="#555" stroke-width="3.500" /></svg>
            </div>
          </div>
          <div class="hint">
            <div class="h1"><svg width="22" height="22" viewBox="0 0 22 22"><circle cx="10.500" cy="11" r="9" fill="#dce8fb" stroke="#5578cc" stroke-width="2" /><path d="M7.500 8.500c0-4 6.500-4 6.500-.5 0 2.500-3.200 2.500-3.200 5M10.800 15v2" fill="none" stroke="#2a4aa8" stroke-width="2" /></svg><b><span v-fit="92">Address</span></b></div>
            <div class="h2"><span v-fit="369">The address of the uncertain function.</span></div>
          </div>
        </div>
        <div class="pfoot"></div>
      </aside>
    </main>

    <footer class="status">
      <span class="s1"><span v-fit="63">Ready</span></span>
      <span class="s2"><span v-fit="94">Calculate</span></span>
      <div class="views">
        <div class="view on"><svg width="28" height="28" viewBox="0 0 28 28" fill="none" stroke="#666" stroke-width="2"><path d="M2 2h24v24H2zM10 2v24M18 2v24M2 10h24M2 18h24" /></svg></div>
        <div class="view"><svg width="28" height="28" viewBox="0 0 28 28" fill="none" stroke="#666" stroke-width="2"><path d="M1 2h26v24H1zM6 6h16v16H6zM10 10h8M10 14h8M10 18h8" /></svg></div>
        <div class="view"><svg width="28" height="28" viewBox="0 0 28 28" fill="none" stroke="#666" stroke-width="2"><path d="M1 2h26v24H1zM1 16h17V2M10 2v14" /></svg></div>
      </div>
      <svg class="zoom" width="254" height="42" viewBox="2208 1478 254 42"><path d="M2213 1496h13v4h-13zM2342 1486h8v22h-8zM2442 1496h17v4h-17zM2449 1489h4v17h-4z" fill="#5f5f5f" /><path d="M2234 1497h200M2335 1492v10" stroke="#a8a8a8" stroke-width="2" /></svg>
      <span class="pct"><span v-fit="54">133%</span></span>
    </footer>

    <footer class="task">
      <div class="ti"><svg width="34" height="34" viewBox="0 0 34 34" fill="#fff"><path d="M0 5l14-2v13H0zM16 2.700L34 0v16H16zM0 18h14v13L0 29zM16 18h18v16l-18-2.600z" /></svg></div>
      <div class="ti"><svg width="34" height="34" viewBox="0 0 34 34"><circle cx="17" cy="17" r="14" fill="none" stroke="#fff" stroke-width="3.600" /></svg></div>
      <div class="ti"><svg width="42" height="34" viewBox="0 0 42 34" fill="none" stroke="#fff" stroke-width="2"><path d="M10 4h22v26H10zM6 8H2v19h4M36 8h4v19h-4" /></svg></div>
      <div class="ti edge"><svg width="42" height="44" viewBox="0 0 42 44"><path d="M1 20C3 8 11 1 22 1c12 0 19 9 19 19v5H14c1 7 7 10 13 10 5 0 9-1 12-3v8c-4 3-9 4-14 4C12 44 4 37 4 27c0-7 4-13 10-16-5 2-10 4-13 9zM14 18h14c0-5-3-8-7-8-4 0-7 3-7 8z" fill="#0078d7" /></svg></div>
      <div class="ti run"><svg width="44" height="38" viewBox="0 0 44 38"><path d="M1 0h18l2 4h22v31H1z" fill="#ffe793" /><path d="M1 0h18l2 4-3 3H1z" fill="#fbc932" /><path d="M4 2h7v3H4z" fill="#fff" /><path d="M9 37V22q0-2 2-2h22q2 0 2 2v15h-6v-8H16v8z" fill="#3ab3e6" /></svg></div>
      <div class="ti store"><svg width="42" height="48" viewBox="0 0 42 48"><path d="M10 13C10-2 30-2 28 10M14 12c1-10 12-12 16-2" fill="none" stroke="#fff" stroke-width="1.800" /><path d="M0 13l42-4-2 38-36-5z" fill="#fff" /><path d="M7 20l9-1v9H7zM18 19l11-1v10H18zM7 30h9v8l-9-1zM18 30h11v10l-11-2z" fill="#000106" /></svg></div>
      <div class="ti act"><svg width="46" height="44" viewBox="0 0 46 44"><path d="M24 6h20v32H24z" fill="#fff" stroke="#217346" stroke-width="1.600" /><path d="M27 11h6M27 16h6M27 21h6M27 26h6M27 31h6M35 11h6M35 16h6M35 21h6M35 26h6M35 31h6" stroke="#217346" stroke-width="2.800" /><path d="M0 5l27-5v44L0 39z" fill="#217346" /><path d="M8 14l11 17M19 14L8 31" stroke="#fff" stroke-width="3.600" /></svg></div>
      <svg class="tray" width="310" height="80" viewBox="2000 1520 310 80" fill="none" stroke="#fff" stroke-width="2">
        <path d="M2007 1565l11-11 12 11" stroke-width="2.400" />
        <path d="M2053 1553h26v16h-26zM2079 1557h3v8h-3" /><path d="M2056 1556h12v10h-12z" fill="#fff" stroke="none" />
        <path d="M2106 1549h23v18h-27M2099 1549h8v9h-8zM2103 1558v16M2115 1567v6M2108 1573h14" />
        <path d="M2147 1556h4l7-7v24l-7-7h-4z" /><path d="M2162 1556q4 5 0 10" /><path d="M2167 1552q7 9 0 18M2172 1549q9 12 0 24" stroke="#666" />
        <path d="M2212 1568l14-22q4-3 4 2l-12 22-7 4zM2210 1558c-8 2-9 16-3 17 7 0 5-8 9-10M2226 1556c9-2 9 6 2 6" />
        <path d="M2259 1547h44v24h-44z" /><path d="M2264 1552.500h34M2264 1558.500h34" stroke-dasharray="3 2" /><path d="M2264 1565h5M2272 1565h18M2293 1565h5" />
      </svg>
      <div class="clock"><div><span v-fit="86">3:58 PM</span></div><div><span v-fit="118">19/03/2017</span></div></div>
      <svg class="note" width="36" height="36" viewBox="0 0 36 36"><path d="M2 3h32v25H22l-5 6-4-6H2z" fill="none" stroke="#fff" stroke-width="2.200" /></svg>
      <div class="desk"></div>
    </footer>
  </div>
</template>

<style>
body { margin: 0; background: #e6e6e6; }
</style>

<style scoped>
* { box-sizing: border-box; }
.screen { width: 2560px; height: 1600px; display: flex; flex-direction: column; overflow: hidden; background: #e6e6e6; font-family: "Noto Sans", "Open Sans", sans-serif; font-size: 24px; color: #444; }
.screen span { white-space: nowrap; }
span > span { display: inline-block; }
.defs { position: absolute; }
svg { display: block; flex: none; overflow: visible; }
.title { height: 70px; background: #217346; color: #fff; display: flex; line-height: 61px; flex: none; }
.name { width: 566px; margin-left: 695px; }
.signin { margin-left: 519px; width: 80px; }
.winbtns { margin-left: 60px; }
.tabs { height: 60px; background: #217346; color: #fff; display: flex; line-height: 58px; flex: none; }
.file { width: 119px; padding-left: 40px; line-height: 61px; }
.tab { padding: 0 28.500px; }
.tab.active { background: #f1f1f1; color: #217346; padding: 0 28px 0 26px; margin: 0 1.600px; }
.tellbulb { margin: 14px 0 0 26px; }
.tell { margin-left: 10px; color: #d6e6dc; width: 82px; }
.person { margin: 12px 0 0 247px; }
.share { margin-left: 12px; }
.ribbon { height: 186px; background: #f1f1f1; border-bottom: 2px solid #d2d2d2; display: flex; flex: none; }
.group { height: 184px; display: flex; flex-direction: column; background: linear-gradient(#d2d2d2, #d2d2d2) right 8px / 2px 168px no-repeat; flex: none; }
.group .btns { display: flex; height: 151px; padding-top: 6px; background: none; }
.btn { height: 138px; padding-top: 6px; display: flex; flex-direction: column; align-items: center; flex: none; }
.btn.on { background: #c5c5c5; }
.btn.up { margin-top: -4px; }
.lbl { line-height: 41px; height: 41px; }
.down { width: 0; height: 0; border: 5px solid transparent; border-top: 6px solid #666; border-bottom: 0; margin-top: 9px; display: block; }
.second { display: flex; line-height: 24px; margin-left: 6px; }
.second .down { margin: 9px 0 0 7px; }
.isep { width: 2px; height: 110px; background: #dcdcdc; margin: 14px 7px 0; }
.glabel { text-align: center; font-size: 21.500px; line-height: 33px; color: #666; }
.glabel span, .namebox span, .ln span, .stab span, b span, .h2 span, .clock span { display: inline-block; white-space: pre; }
.collapse { margin: 160px 0 0 562px; }
.fbar { height: 92px; padding: 20px 10px 0; display: flex; flex: none; }
.namebox { width: 204px; height: 52px; border: 2px solid #c6c6c6; background: #fdfdfd; display: flex; justify-content: space-between; padding: 0 11px 0 14px; line-height: 49px; }
.namebox svg { margin-top: 18px; }
.vdots { width: 4px; margin: 16px 28px 0; display: flex; flex-direction: column; gap: 5px; }
.vdots i { width: 4px; height: 4px; background: #b0b0b0; }
.fxbox { width: 220px; height: 52px; border: 2px solid #c6c6c6; background: #fdfdfd; display: flex; padding: 12px 0 0 24px; }
.fxbox svg + svg { margin-left: 46px; }
.fxbox em { font: italic 700 30px/24px "Liberation Serif", serif; color: #6c6c6c; margin-left: 49px; }
.fxbox small { font-size: 24px; margin-left: -2px; }
.formula { width: 2050px; height: 52px; margin-left: 6px; border: 2px solid #c6c6c6; background: #fdfdfd; display: flex; justify-content: flex-end; padding: 17px 6px 0 0; }
.work { height: 1068px; display: flex; flex: none; }
.left { width: 1910px; display: flex; flex-direction: column; }
.upper { display: flex; height: 1014px; }
.sheet { width: 1868px; height: 1014px; background: #fff; border-bottom: 2px solid #999; overflow: hidden; font: 35.200px/54px "Open Sans", "Noto Sans", sans-serif; color: #000; }
.hrow { display: flex; height: 52px; background: #e6e6e6; border-bottom: 2px solid #999; }
.corner { width: 74px; padding: 9px 0 0 30px; flex: none; background: linear-gradient(#e6e6e6, #999) right / 2px 100% no-repeat; }
.hcell { height: 50px; text-align: center; line-height: 53px; color: #222; flex: none; padding-right: 1px; background: linear-gradient(#d8d8d8, #999) right / 2px 100% no-repeat; }
.hcell.end { background: none; }
.hcell.sel { background: linear-gradient(#aaa, #aaa) right / 2px 100% no-repeat, #d2d2d2; color: #217346; height: 52px; box-shadow: inset 0 -4px #217346; position: relative; }
.row { display: flex; border-right: 2px solid #999; }
.rhead { width: 74px; flex: none; border-right: 2px solid #999; background: linear-gradient(90deg, #e0e0e0, #999) bottom / 100% 2px no-repeat, #e6e6e6; display: flex; align-items: flex-end; justify-content: flex-end; padding: 0 16px 1px 0; color: #222; letter-spacing: -1px; line-height: 54px; }
.cell { flex: none; border-right: 2px solid #d4d4d4; border-bottom: 2px solid #d4d4d4; display: flex; flex-direction: column; justify-content: flex-end; padding: 0 6px; white-space: nowrap; }
.cell:last-child { border-right: 0; }
.ln { height: 54px; flex: none; position: relative; top: .6px; white-space: pre; }
.cell.r { align-items: flex-end; }
.cell.ce { align-items: center; }
.cell.b { font-weight: 700; }
.cell.i { font-style: italic; }
.cell.red { color: #f00; }
.cell.inline { flex-direction: row; justify-content: flex-start; align-items: flex-end; }
.cell.nr { border-right-color: transparent; }
.cell.o { background: #ffc000; }
.cell.nb { border-bottom: 0; padding-bottom: 2px; }
.cell.or { border-right-color: #ffc000; }
.cell.kb { border-bottom-color: #000; }
.cell.kr { border-right-color: #000; }
.cell.err { background: linear-gradient(135deg, #008000 7.500px, transparent 7.500px) 0 0 / 12px 12px no-repeat; }
.last .cell { border-bottom: 0; }
.last .ln { top: 2.600px; }
.vscroll { width: 30px; margin: 4px 0 0 6px; background: #dadada; display: flex; flex-direction: column; height: 1010px; }
.sb { width: 30px; height: 30px; border: 2px solid #ababab; background: #fff; display: flex; align-items: center; justify-content: center; flex: none; }
.thumb { width: 30px; height: 34px; border: 2px solid #ababab; background: #fff; }
.bottom { margin-top: auto; border-color: #c6c6c6; }
.sheetbar { height: 56px; margin-top: -2px; display: flex; position: relative; }
.nav { width: 200px; padding-top: 2px; }
.stab { width: 130px; height: 50px; background: #fff; border: 2px solid #999; border-top: 0; border-bottom: 4px solid #217346; color: #217346; font-weight: 700; font-size: 25px; line-height: 52px; text-align: center; }
.rest { display: flex; }
.add { margin: 11px 0 0 65px; }
.hd { margin: 20px 30px 0 717px; gap: 4px; }
.hscroll { width: 688px; height: 30px; margin-top: 14px; background: #dadada; display: flex; }
.hscroll .thumb { height: 30px; width: 34px; }
.right { margin-left: auto; }
.split { width: 2px; height: 1060px; margin-top: 4px; background: #c0c0c0; }
.pane { width: 618px; margin-left: 14px; display: flex; flex-direction: column; height: 1054px; flex: none; font: 21.300px/36px "DejaVu Sans Condensed", "DejaVu Sans", sans-serif; color: #000; }
.ptitle { height: 82px; display: flex; justify-content: space-between; padding-left: 12px; }
.pt { font: 300 42px/60px "Open Sans", "Noto Sans", sans-serif; color: #217346; padding-top: 22px; height: 82px; }
.ptitle svg { margin: 34px 15px 0 0; }
.ptabs { height: 46px; background: linear-gradient(#d0d5e0, #e8ecf5); display: flex; padding: 4px 0 0 5px; }
.ptab { height: 42px; display: flex; position: relative; flex: none; }
.shape { position: absolute; left: 0; top: 0; }
.pic { margin-top: 3px; position: relative; }
.tt { margin-left: 4px; line-height: 44px; height: 42px; position: relative; }
.pbody { height: 890px; border: 2px solid #abaeb8; margin-top: 1px; padding: 2px 4px 4px; background: #e8edf6; box-shadow: inset 0 2px #dfe3ec, inset -4px 0 #f6f7fa, inset 4px 0 #dde1ea; display: flex; flex-direction: column; flex: none; }
.tool { height: 65px; display: flex; padding-top: 3px; flex: none; }
.t1 { margin: 12px 12px 0 17px; }
.dd { width: 24px; height: 58px; background: #c7daf1; border-right: 5px double #e0e8f4; display: flex; justify-content: center; flex: none; }
.dd i { width: 0; height: 0; border: 5px solid transparent; border-top: 7px solid #3d68a8; border-bottom: 0; margin: 26px 0 0 2px; }
.t2 { margin: 12px 0 0 14px; }
.t3 { margin: 7px 0 0 21px; }
.t4 { margin: 7px 7px 0 auto; }
.t5 { margin: 9px 13px 0 21px; }
.tree { height: 400px; border: 2px solid #828790; background: #fff; display: flex; position: relative; overflow: hidden; flex: none; }
.wires { position: absolute; left: 0; top: 0; }
.nodes { width: 568px; padding-top: 2px; position: relative; }
.node { height: 36px; display: flex; }
.ex { margin-top: 12px; }
.ni { margin: 2px 0 0 12px; }
.nt { margin-left: 7px; padding-left: 3px; padding-right: 4px; line-height: 37px; height: 36px; }
.node.b .nt { font-weight: 700; }
.node.sel .nt { background: #efefef; }
.wsb { width: 34px; background: linear-gradient(90deg, #f0f0f0 31px, #fff 31px); display: flex; flex-direction: column; flex: none; }
.wth { width: 30px; background: #cdcdcd; flex: none; }
.tall { height: 136px; }
.short { height: 62px; }
.dn { margin-top: auto; }
.pgrid { height: 284px; margin-top: 10px; border: 2px solid #a0a0a0; border-right-color: #fff; border-bottom-color: #fff; display: flex; overflow: hidden; flex: none; }
.plist { width: 570px; padding-right: 2px; height: 280px; }
.prow { height: 34px; display: flex; padding-left: 28px; border-top: 2px solid #e8edf6; }
.prow.head { padding-left: 4px; border-top: 0; }
.mb { margin-top: 7px; }
.prow b { margin-left: 14px; line-height: 37px; height: 34px; }
.pico { margin-left: auto; margin-top: 2px; margin-right: -2px; }
.az { font: 700 17px "Liberation Serif", serif; }
.k { width: 248px; padding-left: 7px; background: #fff; margin-right: 2px; line-height: 33px; height: 32px; }
.v { flex: 1; padding-left: 5px; background: #fff; line-height: 33px; height: 32px; }
.prow.sel .k { background: #0078d7; color: #fff; margin-top: -2px; padding-top: 2px; height: 34px; }
.hint { height: 112px; margin-top: 12px; border: 2px solid #aca899; color: #000080; padding: 1px 8px; flex: none; line-height: 26px; }
.h1 { display: flex; }
.h1 b { margin-left: 2px; line-height: 27px; height: 26px; }
.h1 b span { text-decoration: underline; text-decoration-thickness: 2px; text-underline-offset: 3px; }
.pfoot { background: #e8edf6; height: 36px; flex: none; }
.status { height: 44px; border-top: 2px solid #bdbdbd; background: #f1f1f1; display: flex; font-size: 21.500px; line-height: 39px; flex: none; }
.s1 { margin-left: 14px; width: 94px; }
.s2 { width: 1868px; }
.views { display: flex; }
.view { width: 76px; height: 42px; padding: 5px 0 0 24px; }
.view.on { background: #c8c8c8; padding-left: 23px; }
.zoom { margin-left: 4px; }
.pct { margin-left: 28px; line-height: 37px; }
.task { height: 80px; background: #000106; display: flex; flex: none; color: #fff; }
.ti { width: 96px; height: 80px; display: flex; align-items: center; justify-content: center; flex: none; }
.ti.edge { width: 108px; }
.ti.run { width: 88px; background: linear-gradient(#76b9ed, #76b9ed) center bottom / 80px 4px no-repeat; }
.ti.store { width: 104px; }
.ti.act { background: linear-gradient(#76b9ed, #76b9ed) center bottom / 96px 4px no-repeat, #35363b; }
.tray { margin-left: auto; }
.clock { width: 130px; margin-left: 10px; display: flex; flex-direction: column; align-items: center; line-height: 36px; padding-top: 3px; font-size: 23.500px; }
.note { margin: 22px 0 0 26px; }
.desk { width: 10px; border-left: 2px solid #555; margin-left: 38px; }
</style>
